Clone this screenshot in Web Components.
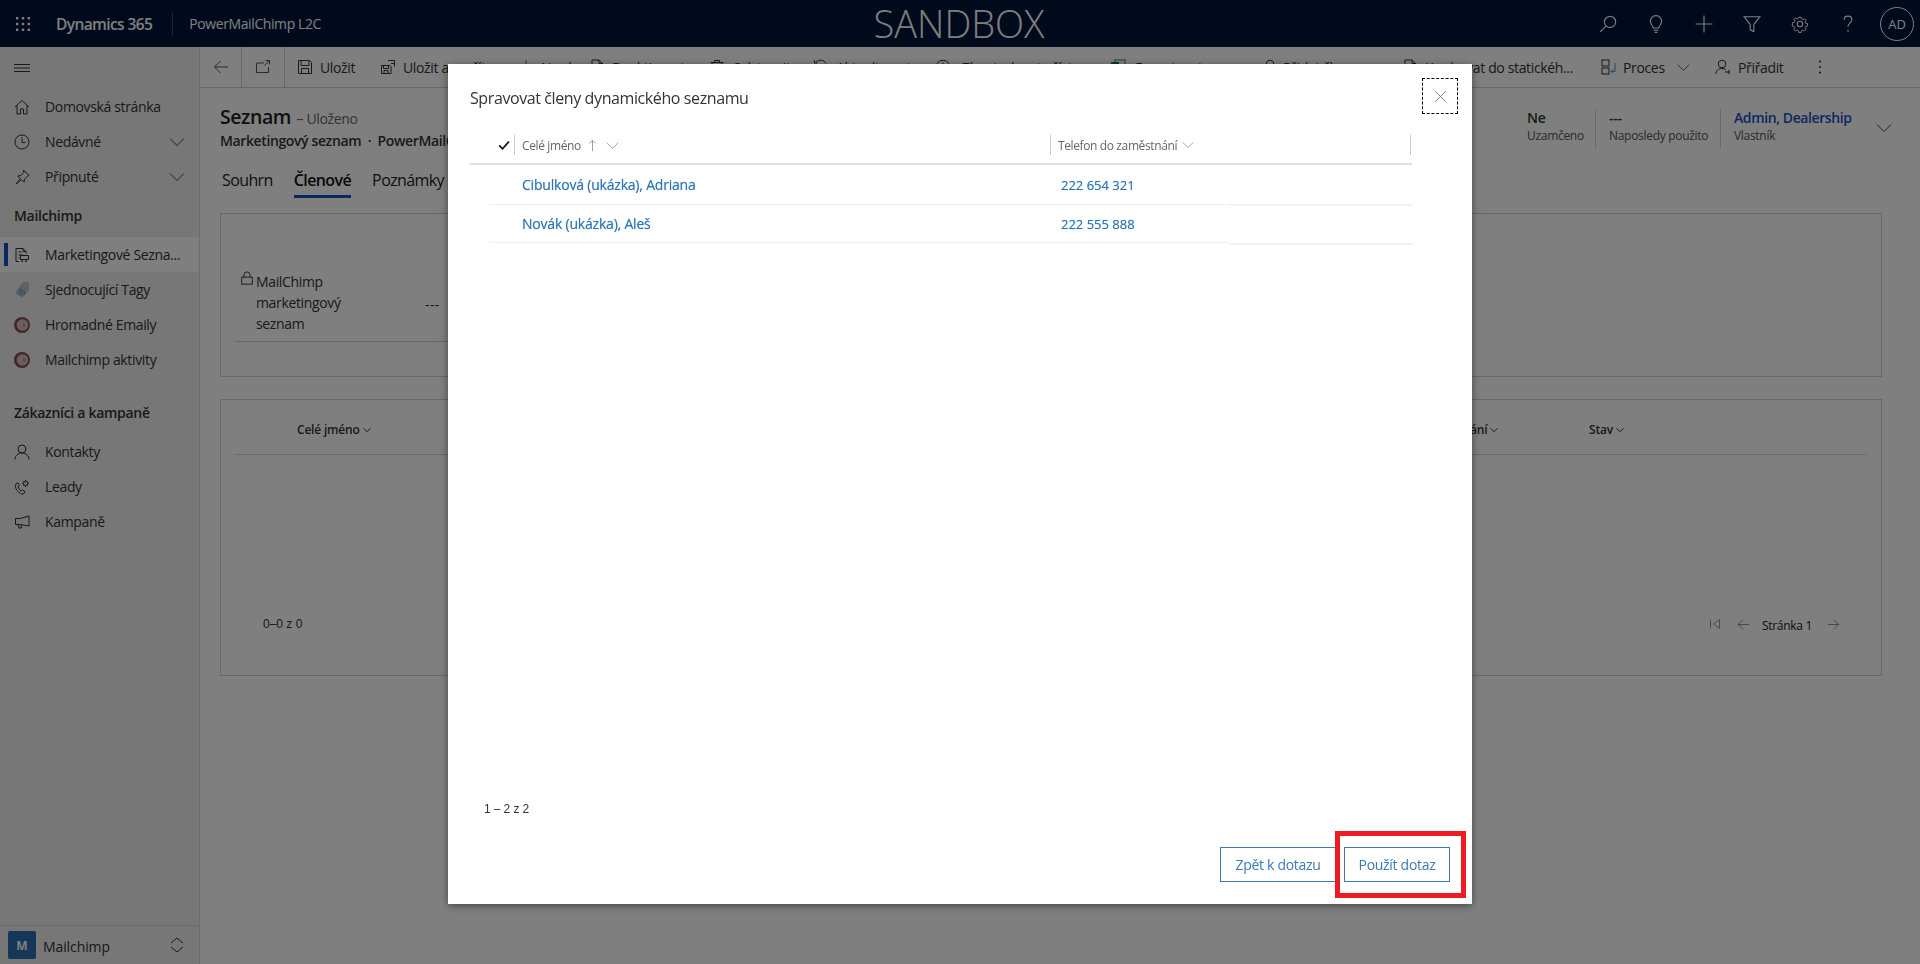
<!DOCTYPE html>
<html lang="cs">
<head>
<meta charset="utf-8">
<title>Spravovat členy dynamického seznamu</title>
<style>
  html, body { margin: 0; height: 100%; overflow: hidden; }
  body {
    font-family: "Open Sans", "Noto Sans", "Liberation Sans", sans-serif;
    font-size: 14px;
    letter-spacing: -0.35px;
    color: #333;
    background: #fff;
  }
  #shell { display: grid; grid-template: 47px 917px / 200px 1720px; height: 964px; }
  crm-header { grid-column: 1 / 3; }
</style>
</head>
<body>
<div id="shell">
  <crm-header></crm-header>
  <crm-sidebar>
    <nav-item icon="home" label="Domovská stránka"></nav-item>
    <nav-item icon="clock" label="Nedávné" expand></nav-item>
    <nav-item icon="pin" label="Připnuté" expand></nav-item>
    <nav-group>Mailchimp</nav-group>
    <nav-item icon="list" label="Marketingové Sezna..." selected></nav-item>
    <nav-item icon="tag" label="Sjednocující Tagy"></nav-item>
    <nav-item icon="chimp" label="Hromadné Emaily"></nav-item>
    <nav-item icon="chimp" label="Mailchimp aktivity"></nav-item>
    <nav-group style="margin-top:14px">Zákazníci a kampaně</nav-group>
    <nav-item icon="person" label="Kontakty"></nav-item>
    <nav-item icon="lead" label="Leady"></nav-item>
    <nav-item icon="megaphone" label="Kampaně"></nav-item>
  </crm-sidebar>
  <crm-main></crm-main>
</div>
<manage-dialog></manage-dialog>

<script>
// ikony, vsechny v mrizce 16x16
const ICONS = {
  waffle: '<g fill="currentColor" stroke="none"><rect x="1" y="1" width="2.4" height="2.4"/><rect x="6.8" y="1" width="2.4" height="2.4"/><rect x="12.6" y="1" width="2.4" height="2.4"/><rect x="1" y="6.8" width="2.4" height="2.4"/><rect x="6.8" y="6.8" width="2.4" height="2.4"/><rect x="12.6" y="6.8" width="2.4" height="2.4"/><rect x="1" y="12.6" width="2.4" height="2.4"/><rect x="6.8" y="12.6" width="2.4" height="2.4"/><rect x="12.6" y="12.6" width="2.4" height="2.4"/></g>',
  search: '<circle cx="9.8" cy="6.2" r="5"/><path d="M6.2 9.8 1 15"/>',
  bulb: '<path d="M5.6 11.5C5.4 9.4 3 8.4 3 5.6a5 5 0 0 1 10 0c0 2.8-2.4 3.8-2.6 5.9zM6 13.5h4M6.8 15.4h2.4"/>',
  plus: '<path d="M8 .5v15M.5 8h15"/>',
  filter: '<path d="M1 1.5h14L9.6 8.4v6.4l-3.2-1.6V8.4z"/>',
  gear: '<circle cx="8" cy="8" r="2.4"/><path d="M6.8 1h2.4l.4 2 1.3.6 1.8-1.1 1.7 1.7-1.1 1.8.6 1.3 2 .4v2.4l-2 .4-.6 1.3 1.1 1.8-1.7 1.7-1.8-1.1-1.3.6-.4 2H6.8l-.4-2-1.3-.6-1.8 1.1-1.7-1.7 1.1-1.8-.6-1.3-2-.4V6.8l2-.4.6-1.3-1.1-1.8 1.7-1.7 1.8 1.1 1.3-.6z" transform="translate(1.1 1.1) scale(.86)"/>',
  help: '<path d="M4.6 4.4C4.6 2.4 6 1 8 1s3.4 1.4 3.4 3.2c0 2.6-3.4 3-3.4 6.2"/><path d="M8 13.2v1.6"/>',
  back: '<path d="M15 8H1.5M7.5 2 1.5 8l6 6"/>',
  forward: '<path d="M1 8h13.5M8.5 2l6 6-6 6"/>',
  popout: '<path d="M9 4H1.5v9.5h12V8M10.5 1.5h4v4M14.5 1.5 9.5 6.5"/>',
  save: '<path d="M1.5 1.5h11l2 2v11h-13z"/><path d="M4 1.5v5h8v-5M4.5 14.5v-5h7v5"/>',
  saveclose: '<path d="M1.5 6.5H10l1 1v7H1.5z"/><path d="M3.5 6.5v3h5v-3M4 14.5v-3h4v3"/><path d="M8 1.5h6.500v6M11 4.500h3"/>',
  add: '<path d="M8 1v14M1 8h14" stroke="#2f8f3f"/>',
  doc: '<path d="M3 1h7l3.500 3.500V15H3z"/><path d="M10 1v3.500h3.500"/>',
  trash: '<path d="M1.500 3.500h13M5.500 3.500V1.500h5v2M3 3.500l.8 11.500h8.400L13 3.500"/>',
  refresh: '<path d="M13 4.500A6 6 0 0 0 3 3.300M1.500 1.200V4h2.800M3 11.500a6 6 0 0 0 10 1.200M14.500 14.800V12h-2.800"/>',
  clockbig: '<circle cx="8" cy="8" r="6.800"/><path d="M8 3.500V8h3.500"/>',
  excel: '<rect x="5" y="1" width="10" height="14" fill="#fff" stroke="#2f8f4f"/><rect x="1" y="3" width="8" height="10" fill="#1e7a3c" stroke="none"/>',
  userplus: '<circle cx="7" cy="5" r="3.800"/><path d="M1 15c0-3.500 2.500-5.500 6-5.500 1.500 0 2.800.4 3.800 1.100M10 13h5M13 11l2 2-2 2"/>',
  process: '<rect x="1" y="1" width="7" height="6"/><rect x="1" y="9" width="7" height="6"/><path d="M14 4v8.500H10M12 10.500l-2 2 2 2" stroke="#4a8fd0"/>',
  dots: '<g fill="currentColor" stroke="none"><circle cx="8" cy="2.500" r="1.100"/><circle cx="8" cy="8" r="1.100"/><circle cx="8" cy="13.500" r="1.100"/></g>',
  chevron: '<path d="M1 4.500 8 11.500 15 4.500"/>',
  updown: '<path d="M2 6 8 1l6 5M2 10l6 5 6-5"/>',
  hamburger: '<path d="M0 4.500h16M0 8h16M0 11.500h16"/>',
  home: '<path d="M1 8 8 1.500 15 8M3 6.500V15h3.500v-5h3v5H13V6.500"/>',
  clock: '<circle cx="8" cy="8" r="7"/><path d="M8 3.500V8.500h3.500"/>',
  pin: '<path d="M9.500 1 15 6.500l-1.500.7-3 3-.5 3L7.500 10.700 2 15l4.300-5.500L3.800 7l3-.5 3-3z"/>',
  list: '<path d="M2 1.500h7l3 3v2M9 1.500v3h3M2 1.500v13h3M4.500 5h3M4.500 8h4M4.500 11h1"/><path d="M6.500 8.500h8v4h-8zM8 12.500l-.5 2h1.500M12 12.500l.5 2h-1.500"/>',
  tag: '<g stroke="none"><path d="M9 0h6v8l-7 8-7-5z" fill="#bcc4ca"/><path d="M6 6l5 3-3 5-5-3z" fill="#8fb2cc"/><path d="M10 9l2.500 1.500L10 14z" fill="#8fb56c"/></g>',
  chimp: '<g stroke="none"><circle cx="8" cy="8" r="8" fill="#8a4a4a"/><circle cx="8.500" cy="8" r="5.800" fill="#d4bcbc"/><path d="M9 5.500l3 2-1.500 3-2-1z" fill="#b89a9a"/></g>',
  person: '<circle cx="8" cy="5" r="4"/><path d="M1 15.500c0-3.800 3-6.500 7-6.500s7 2.700 7 6.500"/>',
  lead: '<path d="M2 5c-1.500 2 0 6 3 8.500 2 1.500 4 2 5 1l1-1.500-2.500-2-1.500 1C5.500 11 4.500 9.500 4 7.500l1.500-1L4 3.800z"/><circle cx="11.500" cy="4.500" r="2"/><path d="M11.500 1v1M11.500 7v1M8 4.500h1M14 4.500h1M9 2l.7.700M13.300 6.300l.7.700M14 2l-.7.700M9.700 6.300 9 7"/>',
  megaphone: '<path d="M15 2v10L6 10.500H1.500v-6H6zM4 10.500l1 3.500h2.500L7 11"/>',
  lock: '<rect x="2" y="7" width="12" height="8"/><path d="M4.500 7V4.500a3.500 3.500 0 0 1 7 0V7"/>',
  close: '<path d="M1.500 1.500l13 13M14.500 1.500l-13 13"/>',
  check: '<path d="M1.500 8.500 6 13l8.500-9.500" stroke-width="2.200"/>',
  up: '<path d="M8 15V1.500M4 5.500l4-4 4 4"/>',
  first: '<path d="M2 2v12M14 2 6 8l8 6z"/>'
};

class FxIcon extends HTMLElement {
  static get observedAttributes() { return ['name', 'size', 'sw']; }
  connectedCallback() { this.render(); }
  attributeChangedCallback() { this.render(); }
  render() {
    if (!this.shadowRoot) this.attachShadow({ mode: 'open' });
    const size = this.getAttribute('size') || 16;
    const sw = this.getAttribute('sw') || 1;
    this.shadowRoot.innerHTML = `
      <style>
        :host { display: inline-flex; flex: none; line-height: 0; }
        svg { fill: none; stroke: currentColor; stroke-width: ${sw}; overflow: visible; }
      </style>
      <svg width="${size}" height="${size}" viewBox="0 0 16 16">${ICONS[this.getAttribute('name')] || ''}</svg>`;
  }
}
customElements.define('fx-icon', FxIcon);

class CrmHeader extends HTMLElement {
  connectedCallback() {
    this.attachShadow({ mode: 'open' }).innerHTML = `
      <style>
        :host { display: flex; align-items: center; height: 47px; background: #00143a; color: #fff; padding-left: 15px; position: relative; }
        .app { font-size: 15.5px; font-weight: 600; margin-left: 25px; letter-spacing: -.6px; }
        .sep { width: 1px; height: 24px; background: #3a4a68; margin: 0 16px 0 20px; }
        .sub { font-size: 14px; letter-spacing: -.4px; }
        .env { flex: 1; text-align: center; font-size: 38px; font-weight: 300; letter-spacing: 0; margin-right: 2px; line-height: 47px; }
        .tools { display: flex; align-items: center; margin-right: 6px; }
        .tools fx-icon { margin-right: 30px; }
        .me { width: 34px; height: 34px; margin-left: -7px; border: 1px solid #fff; border-radius: 50%; box-sizing: border-box; display: flex; align-items: center; justify-content: center; font-size: 13px; letter-spacing: 0; }
      </style>
      <fx-icon name="waffle"></fx-icon>
      <span class="app">Dynamics 365</span>
      <span class="sep"></span>
      <span class="sub">PowerMailChimp L2C</span>
      <span class="env">SANDBOX</span>
      <div class="tools">
        <fx-icon name="search" size="18"></fx-icon>
        <fx-icon name="bulb" size="18"></fx-icon>
        <fx-icon name="plus" size="18"></fx-icon>
        <fx-icon name="filter" size="18"></fx-icon>
        <fx-icon name="gear" size="18"></fx-icon>
        <fx-icon name="help" size="18"></fx-icon>
        <div class="me">AD</div>
      </div>`;
  }
}
customElements.define('crm-header', CrmHeader);

class CrmSidebar extends HTMLElement {
  connectedCallback() {
    this.attachShadow({ mode: 'open' }).innerHTML = `
      <style>
        :host { display: flex; flex-direction: column; background: #efefef; border-right: 1px solid #d8d8d8; box-sizing: border-box; height: 917px; }
        .burger { height: 42px; display: flex; align-items: center; padding-left: 14px; flex: none; color: #333; }
        nav { flex: 1; }
        .area { height: 39px; border-top: 1px solid #d8d8d8; display: flex; align-items: center; padding: 0 14px 0 8px; box-sizing: border-box; flex: none; }
        .tile { width: 28px; height: 28px; background: #2a6fb0; border-radius: 2px; color: #fff; font-weight: 700; font-size: 12px; display: flex; align-items: center; justify-content: center; letter-spacing: 0; }
        .name { flex: 1; margin-left: 7px; font-size: 14px; letter-spacing: -.1px; margin-top: 2px; }
      </style>
      <div class="burger"><fx-icon name="hamburger"></fx-icon></div>
      <nav><slot></slot></nav>
      <div class="area">
        <span class="tile">M</span><span class="name">Mailchimp</span>
        <fx-icon name="updown"></fx-icon>
      </div>`;
  }
}
customElements.define('crm-sidebar', CrmSidebar);

class NavItem extends HTMLElement {
  connectedCallback() {
    const selected = this.hasAttribute('selected');
    this.attachShadow({ mode: 'open' }).innerHTML = `
      <style>
        :host { display: flex; align-items: center; height: 35px; padding: 0 14px; position: relative; background: ${selected ? '#fff' : 'transparent'}; }
        .bar { position: absolute; left: 4px; top: 6px; bottom: 6px; width: 4px; background: #0f4fc0; }
        .label { flex: 1; margin-left: 15px; white-space: nowrap; }
        fx-icon.ex { color: #444; }
      </style>
      ${selected ? '<span class="bar"></span>' : ''}
      <fx-icon name="${this.getAttribute('icon')}"></fx-icon>
      <span class="label">${this.getAttribute('label')}</span>
      ${this.hasAttribute('expand') ? '<fx-icon class="ex" name="chevron"></fx-icon>' : ''}`;
  }
}
customElements.define('nav-item', NavItem);

class NavGroup extends HTMLElement {
  connectedCallback() {
    this.attachShadow({ mode: 'open' }).innerHTML = `
      <style>:host { display: flex; align-items: center; height: 43px; padding-left: 14px; font-weight: 600; letter-spacing: -.3px; }</style><slot></slot>`;
  }
}
customElements.define('nav-group', NavGroup);

class CmdItem extends HTMLElement {
  connectedCallback() {
    this.attachShadow({ mode: 'open' }).innerHTML = `
      <style>
        :host { display: flex; align-items: center; height: 100%; box-sizing: border-box; padding-left: 12px; flex: none; white-space: nowrap; }
        .t { margin-left: var(--gap, 7px); }
        fx-icon.c { margin-left: 12px; }
      </style>
      <fx-icon name="${this.getAttribute('icon')}"></fx-icon>
      <span class="t"><slot></slot></span>
      ${this.hasAttribute('menu') ? '<fx-icon class="c" name="chevron" size="13"></fx-icon>' : ''}`;
    this.style.width = this.getAttribute('w') + 'px';
    if (this.getAttribute('gap')) this.style.setProperty('--gap', this.getAttribute('gap') + 'px');
  }
}
customElements.define('cmd-item', CmdItem);

class CmdBar extends HTMLElement {
  connectedCallback() {
    this.attachShadow({ mode: 'open' }).innerHTML = `
      <style>
        :host { display: flex; align-items: center; height: 41px; border-bottom: 1px solid #d0d0d0; box-sizing: border-box; flex: none; }
        .sq { display: flex; align-items: center; justify-content: center; height: 100%; border-right: 1px solid #d0d0d0; box-sizing: border-box; color: #555; flex: none; }
      </style>
      <div class="sq" style="width:42px"><fx-icon name="back"></fx-icon></div>
      <div class="sq" style="width:43px"><fx-icon name="popout"></fx-icon></div>
      <cmd-item icon="save" w="83">Uložit</cmd-item>
      <cmd-item icon="saveclose" w="138">Uložit a zavřít</cmd-item>
      <cmd-item icon="add" w="71">Nový</cmd-item>
      <cmd-item icon="doc" w="120">Deaktivovat</cmd-item>
      <cmd-item icon="trash" w="104">Odstranit</cmd-item>
      <cmd-item icon="refresh" w="122">Aktualizovat</cmd-item>
      <cmd-item icon="clockbig" w="175" gap="11">Zkontrolovat přístup</cmd-item>
      <cmd-item icon="excel" w="153" gap="9">Exportovat</cmd-item>
      <cmd-item icon="userplus" w="139" gap="4">Přidat členy</cmd-item>
      <cmd-item icon="doc" w="199">Kopírovat do statickéh...</cmd-item>
      <cmd-item icon="process" w="114" gap="6" menu>Proces</cmd-item>
      <cmd-item icon="userplus" w="97">Přiřadit</cmd-item>
      <cmd-item icon="dots" w="40"></cmd-item>`;
  }
}
customElements.define('cmd-bar', CmdBar);

class FormHead extends HTMLElement {
  connectedCallback() {
    this.attachShadow({ mode: 'open' }).innerHTML = `
      <style>
        :host { display: flex; justify-content: space-between; height: 59px; padding-left: 20px; flex: none; }
        .title { margin-top: 15px; line-height: 27px; font-size: 19.5px; font-weight: 600; letter-spacing: -.45px; color: #222; white-space: nowrap; }
        .title small { font-size: 14px; font-weight: 400; color: #666; letter-spacing: -.35px; margin-left: 1px; }
        .crumb { line-height: 18px; font-weight: 600; white-space: nowrap; letter-spacing: -.38px; }
        .facts { display: flex; align-items: flex-start; padding-top: 21px; }
        .fact { height: 39px; box-sizing: border-box; padding-left: 13px; line-height: 17px; white-space: nowrap; }
        .fact + .fact { border-left: 1px solid #d0d0d0; }
        b { display: block; font-weight: 600; letter-spacing: -.3px; }
        .fact span { font-size: 12px; color: #555; letter-spacing: -.3px; }
        .blue { color: #1a4fc0; letter-spacing: -.4px; }
        fx-icon { margin: 11px 28px 0 0; color: #444; }
      </style>
      <div>
        <div class="title">Seznam <small>– Uloženo</small></div>
        <div class="crumb">Marketingový seznam &nbsp;·&nbsp; PowerMailChimp L2C</div>
      </div>
      <div class="facts">
        <div class="fact" style="width:68px;padding-left:0"><b>Ne</b><span>Uzamčeno</span></div>
        <div class="fact" style="width:125px"><b>---</b><span>Naposledy použito</span></div>
        <div class="fact" style="width:156px"><b class="blue">Admin, Dealership</b><span>Vlastník</span></div>
        <fx-icon name="chevron"></fx-icon>
      </div>`;
  }
}
customElements.define('form-head', FormHead);

class FormTabs extends HTMLElement {
  connectedCallback() {
    this.attachShadow({ mode: 'open' }).innerHTML = `
      <style>
        :host { display: flex; height: 51px; padding-left: 22px; gap: 21px; font-size: 16px; letter-spacing: -.6px; flex: none; color: #222; }
        div { height: 100%; box-sizing: border-box; padding-top: 21px; line-height: 24px; }
        .on { font-weight: 600; border-bottom: 3px solid #1a4fc0; color: #111; }
      </style>
      <div>Souhrn</div><div class="on">Členové</div><div>Poznámky</div>`;
  }
}
customElements.define('form-tabs', FormTabs);

class InfoPanel extends HTMLElement {
  connectedCallback() {
    this.attachShadow({ mode: 'open' }).innerHTML = `
      <style>
        :host { display: block; height: 164px; margin: 15px 38px 0 20px; border: 1px solid #cfcfcf; box-sizing: border-box; padding: 57px 14px 0; flex: none; }
        .row { display: flex; height: 70px; width: 900px; border-bottom: 1px solid #cfcfcf; padding-left: 5px; }
        .lbl { display: flex; width: 185px; line-height: 21px; }
        .lbl fx-icon { margin: 0 2px 0 0; color: #222; }
        .val { align-self: center; margin-top: -3px; letter-spacing: .4px; }
      </style>
      <div class="row">
        <div class="lbl"><fx-icon name="lock" size="14"></fx-icon><span>MailChimp<br>marketingový<br>seznam</span></div>
        <div class="val">---</div>
      </div>`;
  }
}
customElements.define('info-panel', InfoPanel);

class MembersPanel extends HTMLElement {
  connectedCallback() {
    this.attachShadow({ mode: 'open' }).innerHTML = `
      <style>
        :host { display: flex; flex-direction: column; height: 277px; margin: 22px 38px 0 20px; border: 1px solid #cfcfcf; box-sizing: border-box; flex: none; }
        .head { display: flex; align-items: center; height: 55px; margin: 0 14px; border-bottom: 1px solid #d8d8d8; padding-left: 62px; font-size: 12px; font-weight: 600; letter-spacing: -.2px; padding-top: 4px; box-sizing: border-box; }
        .head div { display: flex; align-items: center; gap: 3px; white-space: nowrap; }
        .head fx-icon { margin-top: 1px; }
        .foot { margin-top: auto; display: flex; align-items: center; height: 16px; margin-bottom: 43px; padding-left: 42px; font-size: 12px; letter-spacing: -.3px; }
        .num { font-family: "Liberation Sans", sans-serif; letter-spacing: 0; }
        .pages { margin-left: auto; display: flex; align-items: center; margin-right: 41px; color: #777; }
        .pages span { color: #222; margin: 2px 15px 0 12px; }
      </style>
      <div class="head">
        <div style="width:1063px">Celé jméno <fx-icon name="chevron" size="8" sw="2"></fx-icon></div>
        <div style="width:229px">Telefon do zaměstnání <fx-icon name="chevron" size="8" sw="2"></fx-icon></div>
        <div>Stav <fx-icon name="chevron" size="8" sw="2"></fx-icon></div>
      </div>
      <div class="foot">
        <span class="num">0–0 z 0</span>
        <div class="pages">
          <fx-icon name="first" size="12" style="margin-right:16px"></fx-icon>
          <fx-icon name="back" size="13"></fx-icon>
          <span>Stránka 1</span>
          <fx-icon name="forward" size="13"></fx-icon>
        </div>
      </div>`;
  }
}
customElements.define('members-panel', MembersPanel);

class CrmMain extends HTMLElement {
  connectedCallback() {
    this.attachShadow({ mode: 'open' }).innerHTML = `
      <style>:host { display: flex; flex-direction: column; background: #fff; overflow: hidden; min-width: 0; }</style>
      <cmd-bar></cmd-bar>
      <form-head></form-head>
      <form-tabs></form-tabs>
      <info-panel></info-panel>
      <members-panel></members-panel>`;
  }
}
customElements.define('crm-main', CrmMain);

class ManageDialog extends HTMLElement {
  connectedCallback() {
    const people = [
      ['Cibulková (ukázka), Adriana', '222 654 321'],
      ['Novák (ukázka), Aleš', '222 555 888']
    ];
    const rows = people.map(([name, phone], i) => `
      <div class="row" style="height:${i ? 38 : 40}px">
        <div class="c name">${name}</div>
        <div class="c tel">${phone}</div>
        <div class="c tail" style="margin-bottom:-${i + 1}px"></div>
      </div>`).join('');
    this.attachShadow({ mode: 'open' }).innerHTML = `
      <style>
        :host { position: fixed; inset: 0; background: rgba(0,0,0,.5); display: flex; justify-content: center; align-items: flex-start; padding-top: 64px; box-sizing: border-box; }
        .box { position: relative; width: 1024px; height: 840px; background: #fff; box-shadow: 0 2px 8px rgba(0,0,0,.45); display: flex; flex-direction: column; box-sizing: border-box; padding: 14px 22px 22px; }
        header { display: flex; justify-content: space-between; height: 36px; margin-right: -8px; flex: none; }
        h1 { margin: 8px 0 0; font-size: 16px; font-weight: 400; line-height: 24px; color: #333; letter-spacing: -.4px; }
        .x { width: 36px; height: 36px; border: 1px dashed #000; box-sizing: border-box; display: flex; align-items: center; justify-content: center; color: #666; }
        .table { flex: 1; margin: 11px 60px 0 0; }
        .thead { display: grid; grid-template-columns: 44px 536px 361px; height: 40px; border-bottom: 2px solid #e1e1e1; box-sizing: border-box; padding-top: 10px; font-size: 12px; letter-spacing: -.38px; color: #666; width: 942px; }
        .th { display: flex; align-items: center; height: 20px; border-left: 1px solid #c8c8c8; padding-left: 7px; white-space: nowrap; }
        .th fx-icon { color: #888; }
        .ck { display: flex; justify-content: flex-end; align-items: center; height: 20px; padding-right: 4px; color: #111; }
        .th.end { border-right: 1px solid #c8c8c8; }
        .row { display: grid; grid-template-columns: 560px 180px 182px; margin-left: 20px; width: 922px; color: #2a73b0; letter-spacing: -.2px; font-size: 14px; }
        .c { display: flex; align-items: center; border-bottom: 1px solid #f1f1f1; }
        .name, .tel { text-shadow: 0 0 1px rgba(42,115,176,.5); }
        .name { padding-left: 32px; }
        .tel { padding-left: 11px; font-size: 13px; letter-spacing: 0; }
        .tail { border-bottom-width: 2px; }
        .pager { height: 16px; line-height: 16px; font-size: 12px; margin: 1px 0 30px 14px; flex: none; font-family: "Liberation Sans", sans-serif; letter-spacing: -.1px; color: #333; }
        .actions { display: flex; justify-content: flex-end; gap: 8px; flex: none; }
        button { height: 35px; background: #fff; border: 1px solid #3b79b7; color: #3b79b7; font: inherit; font-size: 14px; letter-spacing: -.3px; padding: 0; }
        .mark { position: absolute; left: 887px; top: 767px; width: 131px; height: 67px; border: 5px solid #ed1c24; box-sizing: border-box; pointer-events: none; }
      </style>
      <div class="box">
        <header>
          <h1>Spravovat členy dynamického seznamu</h1>
          <div class="x"><fx-icon name="close" size="13"></fx-icon></div>
        </header>
        <div class="table">
          <div class="thead">
            <div class="ck"><fx-icon name="check" size="12"></fx-icon></div>
            <div class="th">Celé jméno <fx-icon name="up" size="13" style="margin:0 7px 0 5px"></fx-icon><fx-icon name="chevron" size="13"></fx-icon></div>
            <div class="th end">Telefon do zaměstnání <fx-icon name="chevron" size="12" style="margin-left:5px"></fx-icon></div>
          </div>
          ${rows}
        </div>
        <div class="pager">1 – 2 z 2</div>
        <div class="actions">
          <button style="width:116px">Zpět k dotazu</button>
          <button style="width:106px">Použít dotaz</button>
        </div>
        <div class="mark"></div>
      </div>`;
  }
}
customElements.define('manage-dialog', ManageDialog);
</script>
</body>
</html>
